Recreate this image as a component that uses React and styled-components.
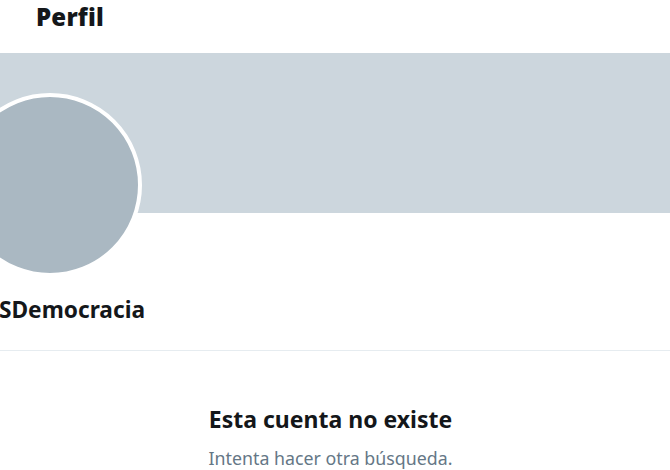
import React from "react";
import styled, { createGlobalStyle } from "styled-components";

const Global = createGlobalStyle`
  html, body { margin: 0; padding: 0; background: #ffffff; }
  body {
    width: 670px;
    height: 470px;
    overflow: hidden;
    font-family: "Noto Sans", "Open Sans", sans-serif;
    color: #14171a;
  }
`;

const Page = styled.div`
  width: 670px;
  display: flex;
  flex-direction: column;
`;

const Header = styled.header`
  height: 53px;
  box-sizing: border-box;
  padding: 2px 0 0 36px;
`;

const Title = styled.h1`
  margin: 0;
  font-size: 24px;
  line-height: 30px;
  font-weight: 900;
  color: #14171a;
  letter-spacing: 0.2px;
`;

const Banner = styled.div`
  position: relative;
  height: 160px;
  background: #ccd6dd;
`;

const Avatar = styled.div`
  position: absolute;
  left: -42px;
  top: 40px;
  width: 176px;
  height: 176px;
  border: 4px solid #ffffff;
  border-radius: 50%;
  background: #aab8c2;
`;

const Info = styled.section`
  padding: 82px 0 25px 0;
  border-bottom: 1px solid #e6ecf0;
`;

const Name = styled.div`
  font-size: 22.7px;
  line-height: 30px;
  font-weight: 700;
  color: #14171a;
  text-indent: -1px;
`;

const Empty = styled.section`
  display: flex;
  flex-direction: column;
  align-items: center;
  padding: 53px 9px 0 0;
`;

const EmptyTitle = styled.div`
  font-size: 23px;
  line-height: 30px;
  font-weight: 700;
  color: #14171a;
`;

const EmptyText = styled.div`
  margin-top: 13px;
  font-size: 17.8px;
  line-height: 22px;
  font-weight: 400;
  color: #657786;
`;

export default function App() {
  return (
    <>
      <Global />
      <Page>
        <Header>
          <Title>Perfil</Title>
        </Header>
        <Banner>
          <Avatar />
        </Banner>
        <Info>
          <Name>SDemocracia</Name>
        </Info>
        <Empty>
          <EmptyTitle>Esta cuenta no existe</EmptyTitle>
          <EmptyText>Intenta hacer otra búsqueda.</EmptyText>
        </Empty>
      </Page>
    </>
  );
}
